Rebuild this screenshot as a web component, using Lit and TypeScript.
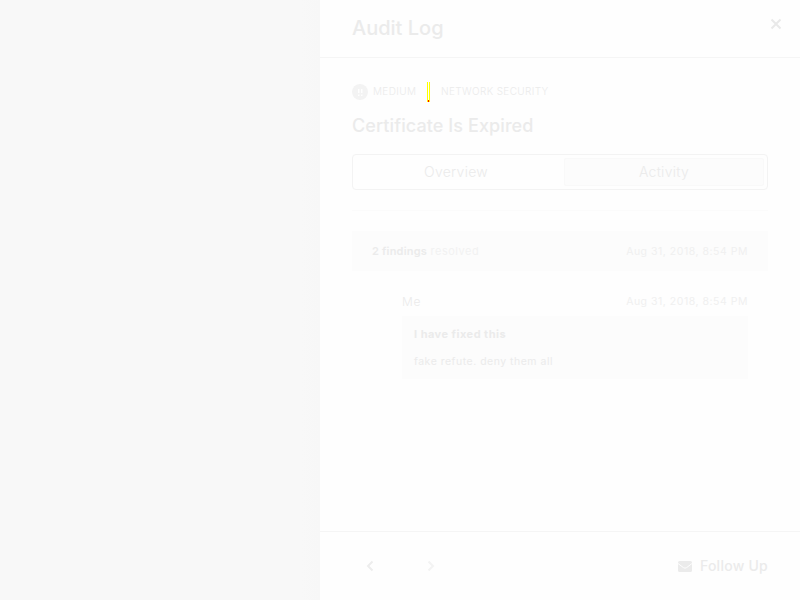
import { LitElement, html, css } from "lit";
import { customElement } from "lit/decorators.js";

@customElement("app-root")
export class AppRoot extends LitElement {
  static styles = css`
    :host { display: flex; width: 800px; height: 600px; overflow: hidden; background: #fefefe; font-family: Inter, sans-serif; color: #ebebeb; }
    * { box-sizing: border-box; }
    .backdrop { width: 320px; background: linear-gradient(90deg, #f8f8f8 0, #f8f8f8 300px, #f7f7f7 320px); }
    .drawer { width: 480px; display: flex; flex-direction: column; background: #fefefe; }
    header { height: 58px; padding: 0 18px 0 32px; display: flex; justify-content: space-between; border-bottom: 1px solid #f5f5f5; }
    h1 { margin: 0; font-size: 20px; font-weight: 500; line-height: 56px; letter-spacing: 0; }
    .close { margin-top: 18px; width: 12px; height: 12px; }
    svg { display: block; flex: none; }
    main { flex: 1; padding: 24px 32px 0; }
    .meta { display: flex; align-items: center; height: 20px; font-size: 10px; letter-spacing: .36px; font-weight: 300; }
    .meta span { line-height: 12px; padding-bottom: 2px; }
    .medium { width: 43px; white-space: nowrap; }
    .dot { width: 16px; height: 16px; margin-right: 5px; }
    .bar { width: 3px; height: 20px; margin: 0 11px; }
    h2 { margin: 11px 0 0; font-size: 18px; font-weight: 500; line-height: 26px; letter-spacing: .09px; }
    .tabs { margin-top: 15px; height: 36px; padding: 3px; display: flex; gap: 8px; border: 1px solid #f3f3f3; border-radius: 4px; font-size: 14px; font-weight: 300; letter-spacing: .27px; line-height: 25px; text-align: center; }
    .tab { flex: 1; border: 1px solid transparent; border-radius: 2px; }
    .tab.active { background: #fcfcfc; border-color: #f9f9f9; }
    .rule { margin-top: 20px; height: 1px; background: #fbfbfb; }
    .row { display: flex; justify-content: space-between; align-items: center; font-size: 11px; }
    .event { margin-top: 20px; height: 40px; padding: 0 20px; background: #fcfcfc; }
    .soft { color: #f2f2f2; letter-spacing: .5px; }
    .date { color: #f0f0f0; font-size: 10.5px; letter-spacing: .52px; }
    .count { color: #ebebeb; font-weight: 600; letter-spacing: .2px; }
    .comment { margin: 20px 20px 0 50px; }
    .author { font-size: 12px; font-weight: 300; letter-spacing: .7px; }
    .comment .row { height: 20px; }
    .note { margin-top: 5px; height: 63px; padding: 10px 12px; background: #fcfcfc; font-size: 10.5px; line-height: 17px; letter-spacing: .5px; }
    .note p { margin: 0 0 10px; }
    .note .title { font-size: 11px; font-weight: 700; letter-spacing: .47px; }
    footer { height: 69px; padding: 0 32px 0 45.5px; display: flex; align-items: center; border-top: 1px solid #f5f5f5; }
    .next { margin-left: 53px; }
    .follow { margin-left: auto; display: flex; align-items: center; gap: 8px; font-size: 14px; font-weight: 500; letter-spacing: .25px; }
    .follow span { line-height: 17px; padding-bottom: 2px; }
  `;

  render() {
    return html`
      <div class="backdrop"></div>
      <section class="drawer">
        <header>
          <h1>Audit Log</h1>
          <svg class="close" viewBox="0 0 12 12" fill="none" stroke="#e9e9e9" stroke-width="2"><path d="M1.5 1.5l9 9M10.5 1.5l-9 9"/></svg>
        </header>
        <main>
          <div class="meta">
            <svg class="dot" viewBox="0 0 16 16"><circle cx="8" cy="8" r="8" fill="#f3f3f3"/><path d="M6 5h1.5v4H6zM9 5h1.5v4H9zM6 10.500h1.500V12H6zM9 10.500h1.500V12H9z" fill="#fefefe"/></svg>
            <span class="medium">MEDIUM</span>
            <svg class="bar" viewBox="0 0 3 20" shape-rendering="crispEdges"><path d="M0 0h1v20H0zM2 0h1v20H2z" fill="#ffff00"/><path d="M1 18h1v2H1z" fill="#ff0000"/></svg>
            <span>NETWORK SECURITY</span>
          </div>
          <h2>Certificate Is Expired</h2>
          <div class="tabs"><div class="tab">Overview</div><div class="tab active">Activity</div></div>
          <div class="rule"></div>
          <div class="row event"><span class="soft"><span class="count">2 findings</span> resolved</span><span class="date">Aug 31, 2018, 8:54 PM</span></div>
          <div class="comment">
            <div class="row"><span class="author">Me</span><span class="date">Aug 31, 2018, 8:54 PM</span></div>
            <div class="note"><p class="title">I have fixed this</p><p>fake refute. deny them all</p></div>
          </div>
        </main>
        <footer>
          <svg width="8" height="12" viewBox="0 0 8 12" fill="none" stroke="#ededed" stroke-width="2"><path d="M6.5 1.5L2 6l4.5 4.5"/></svg>
          <svg class="next" width="8" height="12" viewBox="0 0 8 12" fill="none" stroke="#f3f3f3" stroke-width="2"><path d="M1.5 1.5L6 6l-4.5 4.5"/></svg>
          <div class="follow">
            <svg width="14" height="11" viewBox="0 0 14 11"><rect width="14" height="11" rx="1.5" fill="#ebebeb"/><path d="M0 2.5L5.5 6.7Q7 7.7 8.5 6.7L14 2.5" fill="none" stroke="#fefefe"/></svg>
            <span>Follow Up</span>
          </div>
        </footer>
      </section>
    `;
  }
}
